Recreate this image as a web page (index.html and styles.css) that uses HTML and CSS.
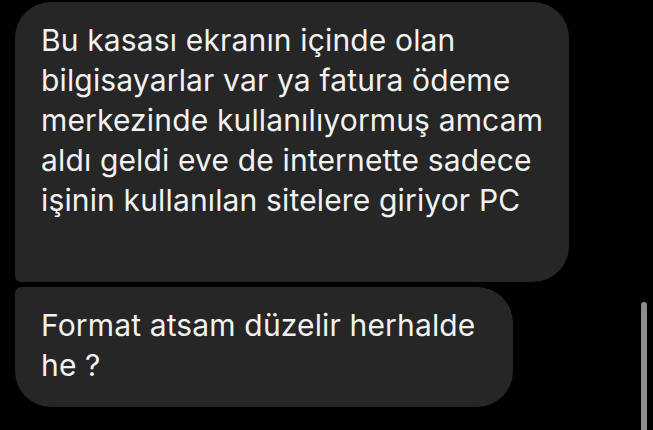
FILE: index.html
```html
<!DOCTYPE html>
<html>
<head>
  <title>Mesajlar</title>
  <link rel="stylesheet" href="styles.css">
</head>
<body>
  <div class="thread">
    <div class="bubble bubble-first">
      Bu kasası ekranın içinde olan<br>
      bilgisayarlar var ya fatura ödeme<br>
      merkezinde kullanılıyormuş amcam<br>
      aldı geldi eve de internette sadece<br>
      işinin kullanılan sitelere giriyor PC
    </div>
    <div class="bubble bubble-last">
      Format atsam düzelir herhalde<br>
      he ?
    </div>
  </div>
  <div class="scrollbar"></div>
</body>
</html>
```

FILE: styles.css
```css
:root {
  --background: #000000;
  --bubble: #262626;
  --text: #f2f2f2;
  --scroll: #8c8c8c;
}

html, body {
  margin: 0;
  padding: 0;
  background: var(--background);
  height: 100%;
  overflow: hidden;
}

body {
  font-family: Inter, "Noto Sans", sans-serif;
  color: var(--text);
  position: relative;
}

.thread {
  display: flex;
  flex-direction: column;
  align-items: flex-start;
  gap: 5px;
  padding: 2px 0 0 15px;
}

.bubble {
  background: var(--bubble);
  font-size: 30px;
  line-height: 40px;
  padding: 18px 0 23px 26px;
  box-sizing: border-box;
  white-space: nowrap;
  letter-spacing: 0.15px;
}

.bubble-first {
  width: 554px;
  height: 280px;
  border-radius: 36px 36px 36px 6px;
}

.bubble-last {
  width: 498px;
  height: 120px;
  border-radius: 6px 36px 36px 36px;
}

.scrollbar {
  position: absolute;
  left: 641px;
  top: 302px;
  width: 6px;
  height: 140px;
  border-radius: 3px;
  background: var(--scroll);
}
```
